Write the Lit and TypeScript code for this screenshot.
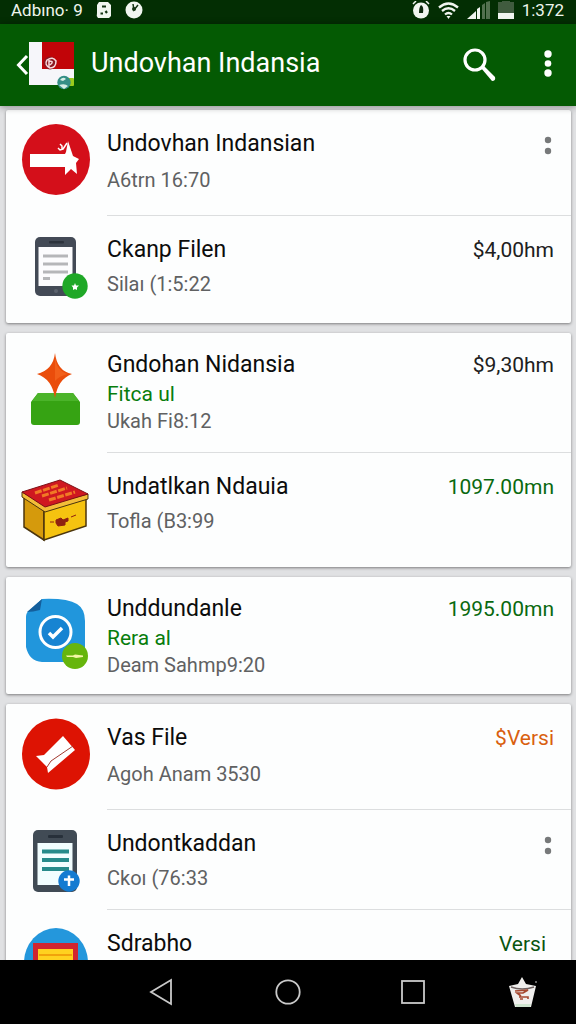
import { LitElement, html, css, svg, nothing } from "lit";
import { customElement, property } from "lit/decorators.js";
import { classMap } from "lit/directives/class-map.js";

interface Entry {
  icon: string;
  title: string;
  tag?: string;
  detail?: string;
  amount?: string;
  tone?: "dark" | "green" | "forest" | "orange";
  space: "snug" | "short" | "lead" | "medium" | "tall";
}

const groups: Entry[][] = [
  [
    { icon: "arrow", title: "Undovhan Indansian", detail: "A6trn 16:70", space: "lead" },
    { icon: "phone", title: "Ckanp Filen", detail: "Silaı (1:5:22", amount: "$4,00hm", tone: "dark", space: "medium" },
  ],
  [
    { icon: "spark", title: "Gndohan Nidansia", tag: "Fitca ul", detail: "Ukah Fi8:12", amount: "$9,30hm", tone: "dark", space: "short" },
    { icon: "chest", title: "Undatlkan Ndauia", detail: "Tofla (B3:99", amount: "1097.00mn", tone: "green", space: "tall" },
  ],
  [
    { icon: "check", title: "Unddundanle", tag: "Rera al", detail: "Deam Sahmp9:20", amount: "1995.00mn", tone: "green", space: "snug" },
  ],
  [
    { icon: "ticket", title: "Vas File", detail: "Agoh Anam 3530", amount: "$Versi", tone: "orange", space: "lead" },
    { icon: "tablet", title: "Undontkaddan", detail: "Ckoı (76:33", space: "short" },
    { icon: "board", title: "Sdrabho", amount: "Versi", tone: "forest", space: "tall" },
  ],
];

const art: Record<string, unknown> = {
  arrow: svg`
    <ellipse cx="34" cy="35.5" rx="34" ry="35.5" fill="#d40f1a"/>
    <path d="M8 30H43L44 28L46 17L50 29L51 32L57 35L54 39L55 50L49 45L43 51L43 43H8Z" fill="#fff"/>
    <path d="M36 24L38 26L41 25L45 19M38 20L40 22V26" fill="none" stroke="#fff" stroke-width="1.500"/>`,
  phone: svg`
    <rect x="13" y="7" width="41" height="59" rx="5" fill="#434a56"/>
    <rect x="27" y="11" width="15" height="2.5" rx="1" fill="#2c323c"/>
    <rect x="16.500" y="17" width="34" height="39" fill="#fcfcfe"/>
    <path d="M21 26H46M21 34H46M21 42H46M21 48.500H28" stroke="#b5b6b9" stroke-width="3.200"/>
    <circle cx="34" cy="61" r="2" fill="#5b626d"/>
    <circle cx="53" cy="56" r="12.700" fill="#1fa827"/>
    <path d="M53 53L54 55.500H57L55 57.500V60L53 59L51 60V57.500L49.500 55.500H52Z" fill="#fff"/>`,
  spark: svg`
    <path d="M16 42H51L58 51V71Q58 74 55 74H12Q9 74 9 71V51Z" fill="#36a313"/>
    <path d="M16 42H51L57 50H10Z" fill="#4bb42a"/>
    <path d="M33 2Q35 20 50 23Q36 28 33 47Q30 28 15 23Q31 19 33 2Z" fill="#ea4d0b"/>
    <path d="M33 5Q34 20 46 23Q37 25 33 30Z" fill="#f2601a"/>`,
  chest: svg`
    <path d="M2 30L22 43V73L2 60Z" fill="#d59a0c" stroke="#4b350d" stroke-width="1.500"/>
    <path d="M22 43L64 32V59L22 73Z" fill="#f5c310" stroke="#4b350d" stroke-width="1.500"/>
    <path d="M0 25L23 38L66 27V32L23 45L0 30Z" fill="#f2bd38" stroke="#4b350d" stroke-width="1"/>
    <path d="M0 25L38 13L66 27L23 40Z" fill="#cf1820" stroke="#7c1016" stroke-width="1"/>
    <path d="M13 26L37 18M20 29L45 21M27 33L53 25" stroke="#f17a25" stroke-width="3" stroke-dasharray="7 1.500"/>
    <path d="M34 53L39 51L41 53L46 51V54L43 55V58L36 59L34 56ZM28 55H32M49 50L54 48" fill="#8f2110" stroke="#8f2110" stroke-width="1"/>`,
  check: svg`
    <path d="M20 4Q45 3 55 9Q63 14 63 26V55Q62 67 51 67H20Q7 66 4 52V22Q4 17 8 15Z" fill="#2196dc"/>
    <path d="M20 4L18 15Q11 17 5 17Z" fill="#145f9c"/>
    <circle cx="33.500" cy="37" r="15.500" fill="#1784d2" stroke="#fff" stroke-width="3"/>
    <path d="M27 38L31 42L40 33" fill="none" stroke="#fff" stroke-width="3.500"/>
    <circle cx="53" cy="61" r="13" fill="#66b50d"/>
    <path d="M44 60.500H51L53 59.500L61 60.500V62L54 63L51 62H45Z" fill="#f4f7a4"/>`,
  ticket: svg`
    <ellipse cx="34" cy="36" rx="34" ry="35.500" fill="#dd1303"/>
    <path d="M41 18L53 32L26 55L25 49L14 38L22 37Z" fill="#fff"/>
    <path d="M25 49L29 43L51 28" fill="none" stroke="#a33a30" stroke-width="1"/>`,
  tablet: svg`
    <rect x="11" y="6" width="44" height="62" rx="5" fill="#414b55"/>
    <rect x="26" y="11" width="15" height="3" rx="1" fill="#27303a"/>
    <rect x="15.500" y="19" width="35" height="42" fill="#f2feff"/>
    <path d="M20 27.500H47M20 36H47M20 45H47" stroke="#278b8b" stroke-width="4"/>
    <circle cx="47" cy="57" r="10.700" fill="#147bd1"/>
    <path d="M47 51.500V62M42 55.500H52" stroke="#fff" stroke-width="2.500"/>`,
  board: svg`
    <ellipse cx="34" cy="39" rx="32" ry="35" fill="#2497dc"/>
    <rect x="11" y="19" width="45" height="34" fill="#d02430"/>
    <rect x="16" y="25" width="35" height="22" fill="#ffd11f"/>
    <path d="M17 31H50" stroke="#f1a20b" stroke-width="2"/>`,
};

@customElement("entry-row")
class EntryRow extends LitElement {
  @property({ attribute: false }) entry!: Entry;

  static styles = css`
    :host { display: block; }
    .row { display: flex; padding-left: 16px; }
    .icon { flex: none; width: 68px; height: 76px; margin: 14px 17px 0 0; overflow: visible; }
    .row.tagged .icon { margin-top: 18px; }
    .body {
      flex: 1; min-width: 0; display: flex; justify-content: space-between;
      padding: 18px 17px 0 0; border-bottom: 1px solid #dcdedf;
    }
    .tagged .body { padding-top: 16px; }
    .snug .body { padding-bottom: 15px; }
    .short .body { padding-bottom: 17px; }
    .lead .body { padding-bottom: 21px; }
    .medium .body { padding-bottom: 25px; }
    .tall .body { padding-bottom: 32px; }
    :host([last]) .body { border-bottom: 0; }
    h2, p { margin: 0; font-weight: 400; white-space: nowrap; }
    h2 { font-size: 23px; line-height: 32px; color: #0c0c0c; }
    .detail { margin-top: 4px; font-size: 20px; line-height: 28px; color: #606162; }
    .lead .detail { margin-top: 6px; }
    .tag { font-size: 21px; line-height: 26px; color: #087d0c; }
    .tagged .detail { margin-top: 0; }
    .amount { font-size: 21px; line-height: 32px; white-space: nowrap; }
    .dark { color: #202020; }
    .green { color: #09690f; }
    .forest { color: #0a5510; padding-right: 8px; }
    .orange { color: #d9600f; }
    button {
      width: 24px; height: 32px; padding: 0; border: 0; background: none;
      margin-right: -6px; color: #77797a;
    }
    button svg { display: block; }
  `;

  render() {
    const e = this.entry;
    const kinds = { row: true, tagged: !!e.tag, [e.space]: true };
    return html`
      <article class=${classMap(kinds)}>
        <svg class="icon" viewBox="0 0 68 76" aria-hidden="true">${art[e.icon]}</svg>
        <div class="body">
          <div>
            <h2>${e.title}</h2>
            ${e.tag ? html`<p class="tag">${e.tag}</p>` : nothing}
            ${e.detail ? html`<p class="detail">${e.detail}</p>` : nothing}
          </div>
          ${e.amount
            ? html`<span class="amount ${e.tone ?? "dark"}">${e.amount}</span>`
            : html`<button aria-label="Menu">
                <svg width="24" height="32" viewBox="0 0 24 32" fill="currentColor">
                  <circle cx="12" cy="12" r="3.200"/><circle cx="12" cy="23" r="3.200"/>
                </svg>
              </button>`}
        </div>
      </article>`;
  }
}

@customElement("app-root")
class AppRoot extends LitElement {
  static styles = css`
    :host {
      display: flex; flex-direction: column; height: 100vh; overflow: hidden;
      background: #e0e1e3; font-family: Roboto, "Noto Sans", sans-serif;
    }
    button { padding: 0; border: 0; background: none; color: inherit; }
    svg { display: block; }
    .status {
      flex: none; display: flex; align-items: center; justify-content: space-between;
      height: 24px; padding: 0 12px 4px 11px; box-sizing: border-box;
      background: #032e03; color: #eef5ec; font-size: 17px; line-height: 20px;
    }
    .side { display: flex; align-items: center; gap: 8px; }
    .side.left { gap: 13px; }
    .bar {
      flex: none; display: flex; align-items: center; height: 82px; padding: 0 16px; box-sizing: border-box;
      background: #045a03; color: #fff; position: relative; z-index: 1;
      box-shadow: 0 1px 7px rgba(0, 0, 0, 0.4);
    }
    .home { display: flex; align-items: center; }
    h1 { flex: 1; margin: 0 0 4px 16px; font-size: 27px; line-height: 36px; font-weight: 400; white-space: nowrap; }
    .actions { display: flex; align-items: center; gap: 40px; }
    main {
      flex: 1; min-height: 0; overflow-y: auto; scrollbar-width: none;
      display: flex; flex-direction: column; gap: 10px; padding: 4px 5px 0 6px;
    }
    .card {
      flex: none; background: #fdfefe; border-radius: 2px;
      box-shadow: 0 1px 3px rgba(0, 0, 0, 0.45);
    }
    nav {
      flex: none; display: grid; grid-template-columns: 126fr 126fr 126fr 94fr;
      align-items: center; justify-items: center;
      height: 64px; padding: 0 1% 0 17%; box-sizing: border-box; background: #000; color: #c9c9c9;
    }
  `;

  render() {
    return html`
      <div class="status">
        <div class="side left">
          <span>Adbıno· 9</span>
          <svg width="16" height="18" viewBox="0 0 16 18">
            <path d="M3 1H12L15 4V15L13 17H2Q0 15 1 12V4Z" fill="#f1f5f0"/>
            <path d="M6 5.500H10M4.500 12.500H7M9.500 10L11 12" stroke="#143414" stroke-width="2.200"/>
          </svg>
          <svg width="18" height="18" viewBox="0 0 18 18">
            <circle cx="9" cy="9" r="8.500" fill="#f1f5f0"/>
            <path d="M8 3L9 9L13 4" fill="none" stroke="#143414" stroke-width="1.500"/>
            <circle cx="9" cy="8" r="2" fill="#143414"/>
          </svg>
        </div>
        <div class="side">
          <svg width="18" height="18" viewBox="0 0 18 18">
            <circle cx="9" cy="9.500" r="8" fill="#f1f5f0"/>
            <path d="M1 3L4 0M17 3L14 0" stroke="#f1f5f0" stroke-width="1.500"/>
            <path d="M9 4Q12 5 11 12H7Q7 6 9 4Z" fill="#102a10"/>
          </svg>
          <svg width="21" height="17" viewBox="0 0 21 17">
            <path d="M1 5.500Q10.500 -2.500 20 5.500M4 9Q10.500 3.500 17 9M7 12.500Q10.500 9.500 14 12.500" fill="none" stroke="#f1f5f0" stroke-width="2.300"/>
            <path d="M8.500 14H12.500L10.500 17Z" fill="#f1f5f0"/>
          </svg>
          <svg width="23" height="18" viewBox="0 0 23 18">
            <path d="M0 18L9 10V18Z" fill="#f1f5f0"/><path d="M10 8L13 6V18H10Z" fill="#f1f5f0"/>
            <path d="M15 4L18 2V18H15ZM19 1L23 0V18H19Z" fill="#53704f"/>
          </svg>
          <svg width="16" height="18" viewBox="0 0 16 18">
            <path d="M0 1H4V0H12V1H16V12H0Z" fill="#405b3e"/><path d="M0 12H16V18H0Z" fill="#f1f5f0"/>
          </svg>
          <span class="time">1:372</span>
        </div>
      </div>
      <header class="bar">
        <button class="home" aria-label="Back">
          <svg width="13" height="24" viewBox="0 0 13 24">
            <path d="M11 3L2.500 12L11 21" fill="none" stroke="#fff" stroke-width="3"/>
          </svg>
          <svg width="46" height="50" viewBox="0 0 46 50">
            <rect x="0" y="2" width="45" height="43" fill="#f6f6fa"/>
            <rect x="13" y="2" width="32" height="27" fill="#c10408"/>
            <circle cx="21" cy="23" r="6.500" fill="#8c1620"/>
            <path d="M18 20Q24 16 27 21Q27 28 21 28Q15 25 18 20ZM20 20V27M20 21Q26 21 21 25" fill="none" stroke="#f8d9dc" stroke-width="1.500"/>
            <rect x="37" y="38" width="8" height="8" rx="1" fill="#9acb1c"/>
            <circle cx="35" cy="42.500" r="6.700" fill="#358f86"/>
            <path d="M31 40Q34 36 37 39L34 41ZM30 45Q36 43 39 46L35 49Z" fill="#d5eee5"/>
          </svg>
        </button>
        <h1>Undovhan Indansia</h1>
        <div class="actions">
          <button aria-label="Search">
            <svg width="34" height="36" viewBox="0 0 34 36">
              <circle cx="13" cy="13" r="10" fill="none" stroke="#fff" stroke-width="3.200"/>
              <path d="M19 21L22 19L33 30Q34 34 30 34Z" fill="#fff"/>
            </svg>
          </button>
          <button aria-label="More options">
            <svg width="24" height="32" viewBox="0 0 24 32" fill="#fff">
              <circle cx="12" cy="5" r="3.700"/><circle cx="12" cy="14.500" r="3.300"/><circle cx="12" cy="24" r="3.700"/>
            </svg>
          </button>
        </div>
      </header>
      <main>
        ${groups.map(
          (group) => html`<section class="card">
            ${group.map((entry, i) => html`<entry-row .entry=${entry} ?last=${i === group.length - 1}></entry-row>`)}
          </section>`
        )}
      </main>
      <nav>
        <button aria-label="Back">
          <svg width="28" height="28" viewBox="0 0 28 28" fill="none" stroke="currentColor" stroke-width="1.800">
            <path d="M24 2V26L4 14Z"/>
          </svg>
        </button>
        <button aria-label="Home">
          <svg width="28" height="28" viewBox="0 0 28 28" fill="none" stroke="currentColor" stroke-width="1.800">
            <circle cx="15" cy="14" r="11.700"/>
          </svg>
        </button>
        <button aria-label="Recent apps">
          <svg width="28" height="28" viewBox="0 0 28 28" fill="none" stroke="currentColor" stroke-width="1.800">
            <rect x="3" y="3" width="22" height="22"/>
          </svg>
        </button>
        <button aria-label="Basket">
          <svg width="30" height="32" viewBox="0 0 30 32">
            <path d="M1 10L10 8L14 1L18 8L28 10L23 31H7Z" fill="#f0efed"/>
            <path d="M3 11Q14 15 26 11" fill="none" stroke="#6d6161" stroke-width="1.500"/>
            <path d="M7 15L20 14L15 17L9 17L13 20M11 21H20V23M12 23H15" fill="none" stroke="#a5482f" stroke-width="1.600"/>
            <path d="M7 28H23L22 31H8Z" fill="#cfe4cf"/>
            <circle cx="28" cy="6" r="1" fill="#888"/>
          </svg>
        </button>
      </nav>`;
  }
}
